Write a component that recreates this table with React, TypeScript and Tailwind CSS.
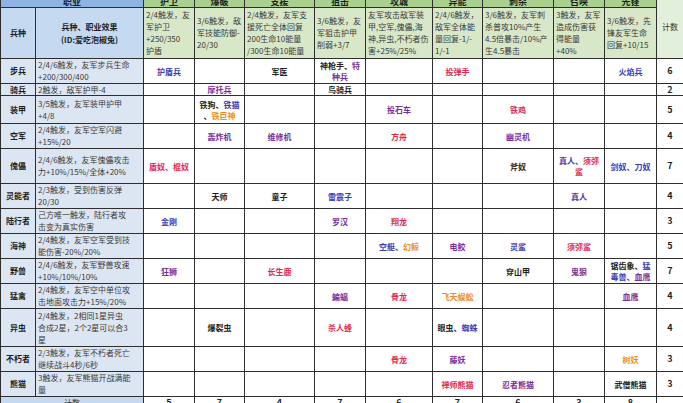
import React from 'react';

type Seg = [string, 'b' | 'p' | 'r' | 'o' | 'k'];

const tone: Record<Seg[1], string> = {
  b: 'text-[#3c3cb4]',
  p: 'text-[#7b2d9b]',
  r: 'text-[#e02a52]',
  o: 'text-[#f08c28]',
  k: 'text-[#222222]',
};

const classes = ['护卫', '爆破', '支援', '狙击', '攻城', '异能', '刺杀', '召唤', '先锋'];

const classDesc: string[][] = [
  ['2/4触发，友', '军护卫', '+250/350', '护盾'],
  ['3/6触发，敌', '军技能防御-', '20/30'],
  ['2/4触发，友军支', '援死亡全体回复', '200生命10能量', '/300生命10能量'],
  ['3/6触发，友', '军狙击护甲', '削弱+3/7'],
  ['友军攻击敌军装', '甲,空军,傀儡,海', '神,异虫,不朽者伤', '害+25%/25%'],
  ['2/4/6触发，', '敌军全体能', '量回复-1/-', '1/-1'],
  ['3/6触发，友军刺', '杀普攻10%产生', '4.5倍暴击/10%产', '生4.5暴击'],
  ['3触发，友军', '造成伤害获', '得能量', '+40%'],
  ['3/6触发，先', '锋友军生命', '回复+10/15'],
];

interface Row {
  name: string;
  h: string;
  desc: string[];
  cells: Record<number, Seg[]>;
  n: number;
}

const rows: Row[] = [
  {
    name: '步兵',
    h: 'h-[25px]',
    desc: ['2/4/6触发，友军步兵生命', '+200/300/400'],
    cells: {
      0: [['护盾兵', 'b']],
      2: [['军医', 'k']],
      3: [['神枪手、', 'k'], ['特\n种兵', 'p']],
      5: [['投弹手', 'r']],
      8: [['火焰兵', 'b']],
    },
    n: 6,
  },
  {
    name: '骑兵',
    h: 'h-[12px]',
    desc: ['2触发，敌军护甲-4'],
    cells: { 1: [['摩托兵', 'p']], 3: [['鸟骑兵', 'k']] },
    n: 2,
  },
  {
    name: '装甲',
    h: 'h-[28px]',
    desc: ['3/5触发，友军装甲护甲', '+4/8'],
    cells: {
      1: [['铁狗、', 'k'], ['铁猫', 'b'], ['\n、', 'k'], ['铁巨神', 'o']],
      4: [['投石车', 'p']],
      6: [['铁鸡', 'r']],
    },
    n: 5,
  },
  {
    name: '空军',
    h: 'h-[25px]',
    desc: ['2/4触发，友军空军闪避', '+15%/20'],
    cells: {
      1: [['轰炸机', 'p']],
      2: [['维修机', 'p']],
      4: [['方舟', 'r']],
      6: [['幽灵机', 'p']],
    },
    n: 4,
  },
  {
    name: '傀儡',
    h: 'h-[35px]',
    desc: ['2/4/6触发，友军傀儡攻击', '力+10%/15%/全体+20%'],
    cells: {
      0: [['盾奴、棍奴', 'r']],
      6: [['斧奴', 'k']],
      7: [['真人、', 'b'], ['须弥\n鲨', 'r']],
      8: [['剑奴、刀奴', 'b']],
    },
    n: 7,
  },
  {
    name: '灵能者',
    h: 'h-[25px]',
    desc: ['2/3触发，受到伤害反弹', '20/30'],
    cells: {
      1: [['天师', 'k']],
      2: [['童子', 'k']],
      3: [['雷震子', 'b']],
      7: [['真人', 'b']],
    },
    n: 4,
  },
  {
    name: '陆行者',
    h: 'h-[25px]',
    desc: ['己方唯一触发，陆行者攻', '击变为真实伤害'],
    cells: { 0: [['金刚', 'b']], 3: [['罗汉', 'p']], 4: [['翔龙', 'r']] },
    n: 3,
  },
  {
    name: '海神',
    h: 'h-[25px]',
    desc: ['2/4触发，友军空军受到技', '能伤害-20%/20%'],
    cells: {
      4: [['空艇、', 'b'], ['幻鲸', 'o']],
      5: [['电鲛', 'p']],
      6: [['灵鲨', 'b']],
      7: [['须弥鲨', 'r']],
    },
    n: 5,
  },
  {
    name: '野兽',
    h: 'h-[24px]',
    desc: ['2/4/6触发，友军野兽攻速', '+10%/10%/10%'],
    cells: {
      0: [['狂狮', 'p']],
      2: [['长生鹿', 'r']],
      6: [['穿山甲', 'k']],
      7: [['鬼狼', 'p']],
      8: [['锯齿象、', 'k'], ['猛\n毒兽、', 'b'], ['血鹰', 'p']],
    },
    n: 7,
  },
  {
    name: '猛禽',
    h: 'h-[25px]',
    desc: ['2/4触发，友军空中单位攻', '击地面攻击力+15%/20%'],
    cells: {
      3: [['蝙蝠', 'p']],
      4: [['骨龙', 'r']],
      5: [['飞天蜈蚣', 'o']],
      8: [['血鹰', 'p']],
    },
    n: 4,
  },
  {
    name: '异虫',
    h: 'h-[38px]',
    desc: ['2/4触发，2相同1星异虫', '合成2星，2个2星可以合3', '星'],
    cells: {
      1: [['爆裂虫', 'k']],
      3: [['杀人蜂', 'r']],
      5: [['眼虫、', 'k'], ['蜘蛛', 'b']],
    },
    n: 4,
  },
  {
    name: '不朽者',
    h: 'h-[24px]',
    desc: ['2/3触发，友军不朽者死亡', '继续战斗4秒/6秒'],
    cells: { 4: [['骨龙', 'r']], 5: [['藤妖', 'p']], 8: [['树妖', 'o']] },
    n: 3,
  },
  {
    name: '熊猫',
    h: 'h-[25px]',
    desc: ['3触发，友军熊猫开战满能', '量'],
    cells: {
      5: [['禅师熊猫', 'r']],
      6: [['忍者熊猫', 'p']],
      8: [['武僧熊猫', 'k']],
    },
    n: 3,
  },
];

const totals = [5, 7, 4, 7, 6, 7, 6, 3, 8];

const widths = ['w-[35px]', 'w-[108px]', 'w-[51px]', 'w-[50px]', 'w-[70px]', 'w-[51px]', 'w-[67px]', 'w-[50px]', 'w-[71px]', 'w-[51px]', 'w-[52px]', 'w-[27px]'];

const cell = 'border border-[#2e2e2e] p-0 overflow-hidden';

function Lines({ lines, lead = 'leading-[12px]' }: { lines: string[]; lead?: string }) {
  return (
    <div className={`px-[2px] ${lead}`}>
      {lines.map((l) => (
        <div key={l} className="whitespace-nowrap">
          {l}
        </div>
      ))}
    </div>
  );
}

export default function App() {
  return (
    <div className="w-[683px] h-[403px] overflow-hidden bg-white font-['Noto_Sans_CJK_SC','Liberation_Sans',sans-serif]">
      <table className="-mt-[5px] w-[683px] table-fixed border-collapse text-[8px] leading-[10px]">
        <colgroup>
          {widths.map((w, i) => (
            <col key={i} className={w} />
          ))}
        </colgroup>
        <tbody>
          <tr className="h-[12px]">
            <td colSpan={2} className={`${cell} bg-[#8db4e2] text-center font-bold text-[9px] text-[#1f1f1f]`}>
              职业
            </td>
            {classes.map((c) => (
              <td key={c} className={`${cell} bg-[#a9d08e] text-center font-bold text-[9px] text-[#1f1f1f]`}>
                {c}
              </td>
            ))}
            <td rowSpan={2} className={`${cell} bg-[#e2efda] text-center text-[8px] text-[#333]`}>
              计数
            </td>
          </tr>
          <tr className="h-[51px]">
            <td className={`${cell} bg-[#c5d9f1] text-center font-bold text-[#1f1f1f]`}>兵种</td>
            <td className={`${cell} bg-[#c5d9f1] text-center font-bold text-[#1f1f1f] leading-[13px]`}>
              <div>兵种、职业效果</div>
              <div>(ID:爱吃泡椒兔)</div>
            </td>
            {classDesc.map((d, i) => (
              <td key={i} className={`${cell} bg-[#d8e7c8] text-left align-middle text-[#3a3a3a]`}>
                <Lines lines={d} />
              </td>
            ))}
          </tr>
          {rows.map((r) => (
            <tr key={r.name} className={r.h}>
              <td className={`${cell} bg-[#dce6f2] text-center font-bold text-[#1f1f1f]`}>{r.name}</td>
              <td className={`${cell} bg-[#dce6f2] text-left align-middle text-[#3a3a3a]`}>
                <Lines lines={r.desc} lead={r.desc.length === 1 ? 'leading-[10px]' : 'leading-[12px]'} />
              </td>
              {classes.map((_, i) => {
                const segs = r.cells[i];
                return (
                  <td key={i} className={`${cell} text-center align-middle font-bold leading-[11px]`}>
                    {segs && (
                      <div className="whitespace-pre-line">
                        {segs.map(([t, c], j) => (
                          <span key={j} className={tone[c]}>
                            {t}
                          </span>
                        ))}
                      </div>
                    )}
                  </td>
                );
              })}
              <td className={`${cell} text-center font-bold text-[9px] text-[#1f1f1f]`}>{r.n}</td>
            </tr>
          ))}
          <tr className="h-[12px]">
            <td colSpan={2} className={`${cell} bg-[#c5d9f1] text-center text-[#333]`}>
              计数
            </td>
            {totals.map((t, i) => (
              <td key={i} className={`${cell} text-center font-bold text-[9px] text-[#1f1f1f]`}>
                {t}
              </td>
            ))}
            <td className={cell}></td>
          </tr>
        </tbody>
      </table>
    </div>
  );
}
